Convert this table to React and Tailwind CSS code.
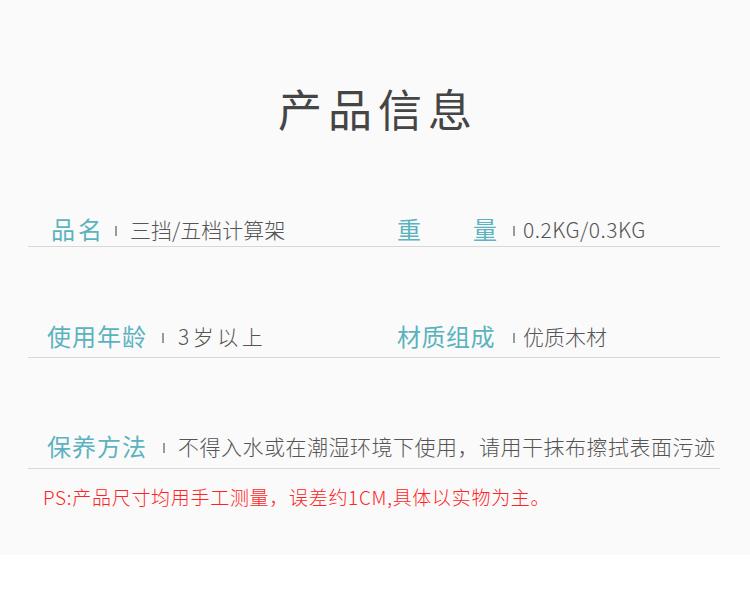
const font = { fontFamily: '"Noto Sans CJK SC", "Noto Sans", sans-serif' };

function Sep({ className = '' }) {
  return <span className={`mt-[3px] h-[10px] w-[2px] shrink-0 bg-[#9a9a9a] ${className}`} />;
}

export default function App() {
  return (
    <div style={font} className="w-[750px] h-[591px] bg-white font-light">
      <div className="h-[555px] bg-[#fafafa] pt-[80px]">
        <h1 className="h-[56px] text-center text-[44px] leading-[56px] font-normal tracking-[6px] pl-[6px] text-[#454545]">
          产品信息
        </h1>

        <div className="mx-[28px] mt-[76px] w-[692px]">
          {/* row 1 */}
          <div className="flex h-[35px] items-center border-b border-[#d8d8d8]">
            <div className="flex w-[369px] items-center">
              <span className="ml-[23px] text-[24px] leading-none font-normal tracking-[3px] text-[#5bb3bf]">品名</span>
              <Sep className="ml-[10px]" />
              <span className="ml-[13px] text-[21px] leading-none text-[#555]">三挡/五档计算架</span>
            </div>
            <div className="flex items-center">
              <span className="flex w-[100px] justify-between text-[24px] leading-none font-normal text-[#5bb3bf]">
                <span>重</span>
                <span>量</span>
              </span>
              <Sep className="ml-[16px]" />
              <span className="ml-[8px] text-[21px] leading-none tracking-[0.5px] text-[#555]">0.2KG/0.3KG</span>
            </div>
          </div>

          {/* row 2 */}
          <div className="mt-[68px] flex h-[43px] items-center border-b border-[#d8d8d8]">
            <div className="flex w-[369px] items-center">
              <span className="ml-[19px] text-[24px] leading-none font-normal tracking-[1px] text-[#5bb3bf]">使用年龄</span>
              <Sep className="ml-[15px]" />
              <span className="ml-[14px] text-[21px] leading-none tracking-[3.5px] text-[#555]">3岁以上</span>
            </div>
            <div className="flex items-center">
              <span className="w-[100px] text-[24px] leading-none font-normal tracking-[0.5px] text-[#5bb3bf]">材质组成</span>
              <Sep className="ml-[16px]" />
              <span className="ml-[8px] text-[21px] leading-none text-[#555]">优质木材</span>
            </div>
          </div>

          {/* row 3 */}
          <div className="mt-[66px] flex h-[45px] items-center border-b border-[#d8d8d8]">
            <span className="ml-[19px] text-[24px] leading-none font-normal tracking-[1px] text-[#5bb3bf]">保养方法</span>
            <Sep className="ml-[16px]" />
            <span className="ml-[13px] whitespace-nowrap text-[21px] leading-none tracking-[0.5px] text-[#555]">
              不得入水或在潮湿环境下使用，请用干抹布擦拭表面污迹
            </span>
          </div>

          <p className="ml-[15px] mt-[16px] h-[24px] whitespace-nowrap text-[19px] leading-[24px] tracking-[0.7px] text-[#ff2424]">
            PS:产品尺寸均用手工测量，误差约1CM,具体以实物为主。
          </p>
        </div>
      </div>
    </div>
  );
}
